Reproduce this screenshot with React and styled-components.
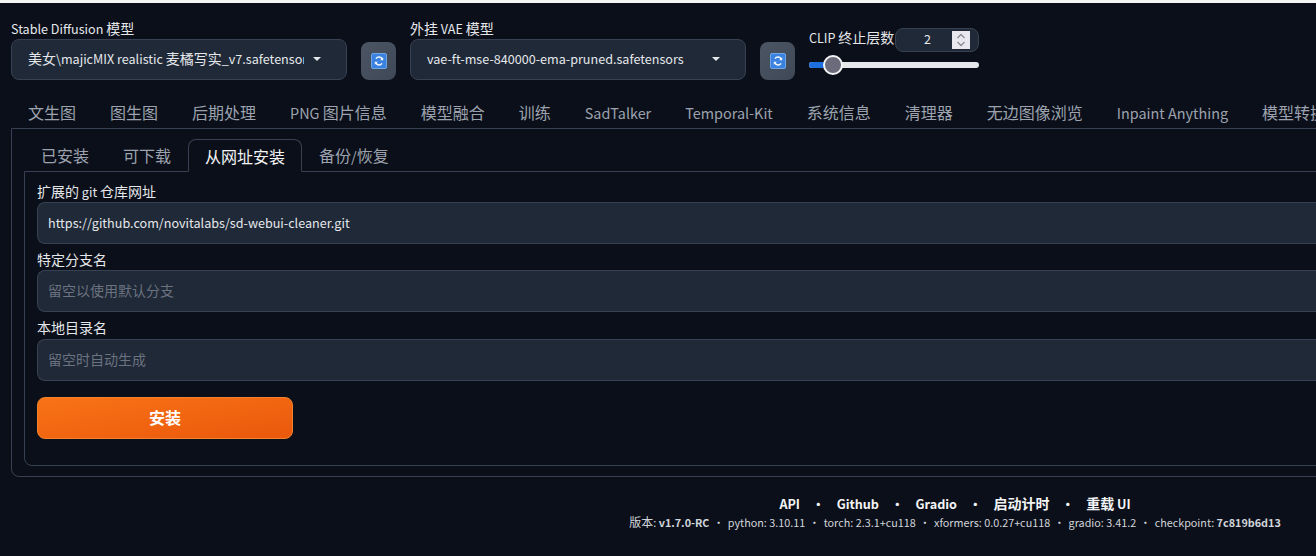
import React from "react";
import styled, { createGlobalStyle } from "styled-components";

const FONT = `"Noto Sans CJK SC", "Noto Sans", sans-serif`;
const Global = createGlobalStyle`
  html, body { margin: 0; width: 1316px; height: 556px; background: #0b0f19; overflow: hidden; }
  * { box-sizing: border-box; }
  body { font-family: ${FONT}; color: #f3f4f6; }
`;
const Strip = styled.div`height:3px;background:#f5f5f5;`;
const Page = styled.div`width:1910px;padding:0 11px;`;
const TopRow = styled.div`display:flex;align-items:flex-start;height:93px;`;
const Field = styled.div`width:336px;margin-right:14px;padding-top:16px;`;
const Label = styled.div`font-size:14px;line-height:18px;padding-bottom:2px;color:#e5e7eb;white-space:nowrap;margin-bottom:${p=>p.mb||0}px;`;
const Select = styled.div`height:41px;border:1px solid #374151;border-radius:8px;background:#1f2937;display:flex;align-items:center;padding:0 25px 3px 16px;font-size:14px;color:#e5e7eb;justify-content:space-between;white-space:nowrap;`;
const Clip = styled.span`overflow:hidden;width:276px;`;
const Caret = styled.span`width:0;height:0;border:4.5px solid transparent;border-top:4px solid #e5e7eb;border-bottom:0;flex:none;margin-top:2px;`;
const Refresh = styled.div`width:35px;height:38px;border-radius:8px;background:linear-gradient(to bottom right,#4b5563,#3f4856);margin:39px 14px 0 0;display:flex;align-items:center;justify-content:center;flex:none;`;
const Clipper = styled.div`width:170px;padding-top:25px;`;
const ClipHead = styled.div`display:flex;align-items:center;justify-content:space-between;height:24px;font-size:14px;line-height:20px;color:#e5e7eb;white-space:nowrap;`;
const ClipLabel = styled.span`padding-bottom:7px;`;
const Num = styled.div`width:84px;height:24px;border-radius:8px;background:#1f2937;border:1px solid #374151;display:flex;align-items:center;padding:0 0 1px 28px;font-size:14px;position:relative;flex:none;`;
const Spin = styled.span`position:absolute;right:8px;top:2px;width:18px;height:18px;background:#e8e8ee;display:flex;align-items:center;justify-content:center;`;
const Track = styled.div`height:6px;background:#e5e7eb;border-radius:3px;position:relative;margin-top:10px;`;
const Fill = styled.div`width:24px;height:6px;background:#1d6fe0;border-radius:3px;`;
const Thumb = styled.div`position:absolute;left:14px;top:-7px;width:20px;height:20px;border-radius:50%;background:#6b6b7b;border:2px solid #f3f4f6;`;
const Tabs = styled.div`display:flex;height:32px;align-items:center;gap:34px;padding-left:17px;font-size:16px;line-height:20px;color:#9ca3af;white-space:nowrap;`;
const Outer = styled.div`height:349px;border:1px solid #374151;border-radius:0 0 8px 8px;padding:10px 12px;`;
const SubRow = styled.div`display:flex;height:32px;font-size:16px;color:#9ca3af;`;
const Sub = styled.div`padding:0 17px;height:32px;line-height:33px;white-space:nowrap;${p=>p.$active?"color:#f3f4f6;padding:0 16px;border:1px solid #374151;border-bottom:1px solid #0b0f19;border-radius:8px 8px 0 0;position:relative;z-index:1;height:33px;line-height:32px;":""}`;
const Inner = styled.div`height:295px;border:1px solid #374151;border-radius:0 0 8px 8px;padding:10px 12px;`;
const Input = styled.div`height:42px;border-radius:8px 0 0 8px;background:#1f2937;border:1px solid #374151;border-right:0;display:flex;align-items:center;padding:0 0 ${p=>p.$ph?2:0}px 10px;font-size:14px;color:${p=>p.$ph?"#6b7280":"#e5e7eb"};margin-bottom:6px;`;
const Install = styled.div`width:256px;height:42px;margin-top:16px;padding-bottom:2px;border-radius:8px;border:1px solid #f3822f;background:linear-gradient(to bottom right,#f97316,#ea580c);display:flex;align-items:center;justify-content:center;font-size:16px;font-weight:700;color:#fff;`;
const Foot = styled.div`padding-top:16px;text-align:center;`;
const Links = styled.div`font-size:14px;line-height:20px;font-weight:700;color:#f3f4f6;white-space:nowrap;`;
const Sep = styled.span`margin:0 12px;font-size:0.9em;line-height:1;`;
const Versions = styled.div`font-size:12px;line-height:18px;color:#d1d5db;white-space:nowrap;`;
const Dot = styled.span`margin:0 3.800px;font-size:0.9em;line-height:1;`;
const Lat = styled.span`font-size:0.9em;line-height:1;`;

// Latin runs are set 10% smaller than the CJK runs around them
const mix = (s) => s.split(/([\u4e00-\u9fff]+)/).map((seg, i) => (i % 2 ? seg : seg && <Lat key={i}>{seg}</Lat>));

const Icon = () => <svg width="16" height="16" viewBox="0 0 16 16"><rect x="0.5" y="0.5" width="15" height="15" rx="1.5" fill="#3b82e0" stroke="#6ea6ea"/><path d="M11.300 6.400A3.600 3.600 0 0 0 5 5.600M4.700 9.600a3.600 3.600 0 0 0 6.300.8" fill="none" stroke="#f2f7fd" strokeWidth="1.5"/><path d="M12.200 4.200v3h-3zM3.800 11.800v-3h3z" fill="#f2f7fd"/></svg>;

const tabs = ["文生图","图生图","后期处理","PNG 图片信息","模型融合","训练","SadTalker","Temporal-Kit","系统信息","清理器","无边图像浏览","Inpaint Anything","模型转换"];

export default function App(){
 return <><Global/><Strip/><Page>
  <TopRow>
   <Field><Label>{mix("Stable Diffusion 模型")}</Label><Select><Clip>{mix("美女\\majicMIX realistic 麦橘写实_v7.safetensors")}</Clip><Caret/></Select></Field>
   <Refresh><Icon/></Refresh>
   <Field><Label>{mix("外挂 VAE 模型")}</Label><Select><span>{mix("vae-ft-mse-840000-ema-pruned.safetensors")}</span><Caret/></Select></Field>
   <Refresh><Icon/></Refresh>
   <Clipper><ClipHead><ClipLabel>{mix("CLIP 终止层数")}</ClipLabel><Num>{mix("2")}<Spin><svg width="12" height="16" viewBox="0 0 12 16"><path d="M2.500 6l3.500-3.500L9.500 6M2.500 10l3.500 3.500L9.500 10" fill="none" stroke="#8a8a92" strokeWidth="1.3"/></svg></Spin></Num></ClipHead><Track><Fill/><Thumb/></Track></Clipper>
  </TopRow>
  <Tabs>{tabs.map(t=><span key={t}>{mix(t)}</span>)}</Tabs>
  <Outer>
   <SubRow><Sub>已安装</Sub><Sub>可下载</Sub><Sub $active>从网址安装</Sub><Sub>{mix("备份/恢复")}</Sub></SubRow>
   <Inner>
    <Label>{mix("扩展的 git 仓库网址")}</Label><Input>{mix("https://github.com/novitalabs/sd-webui-cleaner.git")}</Input>
    <Label>特定分支名</Label><Input $ph>留空以使用默认分支</Input>
    <Label mb={1}>本地目录名</Label><Input $ph>留空时自动生成</Input>
    <Install>安装</Install>
   </Inner>
  </Outer>
  <Foot>
   <Links>{mix("API")}<Sep>•</Sep>{mix("Github")}<Sep>•</Sep>{mix("Gradio")}<Sep>•</Sep>启动计时<Sep>•</Sep>{mix("重载 UI")}</Links>
   <Versions>{mix("版本: ")}<b>{mix("v1.7.0-RC")}</b><Dot>•</Dot>{mix("python: 3.10.11")}<Dot>•</Dot>{mix("torch: 2.3.1+cu118")}<Dot>•</Dot>{mix("xformers: 0.0.27+cu118")}<Dot>•</Dot>{mix("gradio: 3.41.2")}<Dot>•</Dot>{mix("checkpoint: ")}<b>{mix("7c819b6d13")}</b></Versions>
  </Foot>
 </Page></>;
}
